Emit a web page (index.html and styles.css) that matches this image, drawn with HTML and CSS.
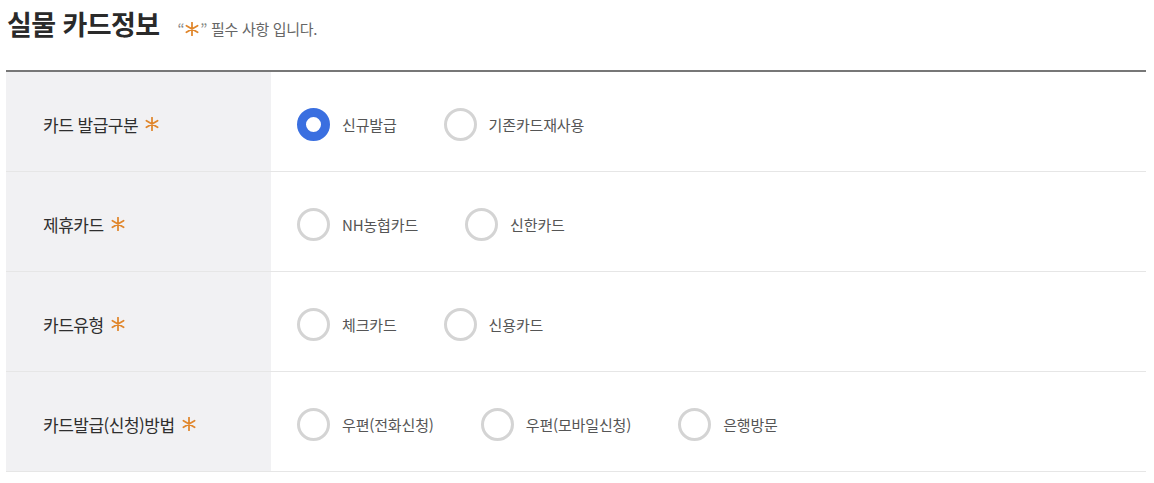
FILE: index.html
```html
<!DOCTYPE html>
<html lang="ko">
<head>
<meta charset="utf-8">
<link rel="stylesheet" href="styles.css">
</head>
<body>
<div class="page">
  <div class="head">
    <h2 class="title">실물 카드정보</h2>
    <p class="note"><span class="q">“<svg class="ast ast-sm" viewBox="0 0 12 12"><path d="M6 0.5V11.5M1.2 3.2L10.8 8.8M1.2 8.8L10.8 3.2"/></svg>”</span> 필수 사항 입니다.</p>
  </div>
  <div class="table">
    <div class="row">
      <div class="label">카드 발급구분<svg class="ast" viewBox="0 0 12 12"><path d="M6 0.5V11.5M1.2 3.2L10.8 8.8M1.2 8.8L10.8 3.2"/></svg></div>
      <div class="field">
        <label class="opt"><span class="radio checked"></span>신규발급</label>
        <label class="opt"><span class="radio"></span>기존카드재사용</label>
      </div>
    </div>
    <div class="row">
      <div class="label">제휴카드<svg class="ast" viewBox="0 0 12 12"><path d="M6 0.5V11.5M1.2 3.2L10.8 8.8M1.2 8.8L10.8 3.2"/></svg></div>
      <div class="field">
        <label class="opt"><span class="radio"></span>NH농협카드</label>
        <label class="opt"><span class="radio"></span>신한카드</label>
      </div>
    </div>
    <div class="row">
      <div class="label">카드유형<svg class="ast" viewBox="0 0 12 12"><path d="M6 0.5V11.5M1.2 3.2L10.8 8.8M1.2 8.8L10.8 3.2"/></svg></div>
      <div class="field">
        <label class="opt"><span class="radio"></span>체크카드</label>
        <label class="opt"><span class="radio"></span>신용카드</label>
      </div>
    </div>
    <div class="row">
      <div class="label">카드발급(신청)방법<svg class="ast" viewBox="0 0 12 12"><path d="M6 0.5V11.5M1.2 3.2L10.8 8.8M1.2 8.8L10.8 3.2"/></svg></div>
      <div class="field">
        <label class="opt"><span class="radio"></span>우편(전화신청)</label>
        <label class="opt"><span class="radio"></span>우편(모바일신청)</label>
        <label class="opt"><span class="radio"></span>은행방문</label>
      </div>
    </div>
  </div>
</div>
</body>
</html>
```

FILE: styles.css
```css
* { box-sizing: border-box; }
html, body { margin: 0; padding: 0; background: #fff; }
body {
  font-family: "Noto Sans CJK KR", "Noto Sans", sans-serif;
  color: #333;
}
.page { padding: 0 8px 0 6px; }
.head {
  display: flex;
  align-items: baseline;
  height: 70px;
  padding-top: 6px;
}
.title {
  margin: 0 0 0 1px;
  font-size: 27px;
  font-weight: 700;
  color: #2a2a2a;
  letter-spacing: -0.6px;
  line-height: 36px;
}
.note {
  margin: 0 0 0 18px;
  font-size: 15px;
  color: #666;
  letter-spacing: -0.3px;
  display: flex;
  align-items: center;
}
.note .q { color: #888; display: inline-flex; align-items: center; margin-right: 4px; }
.ast {
  width: 12px;
  height: 12px;
  fill: none;
  stroke: #e0862b;
  stroke-width: 1.5;
  stroke-linecap: round;
  flex: none;
}
.ast-sm { width: 14px; height: 14px; margin: 0 1px; }
.table {
  border-top: 2px solid #777;
}
.row {
  display: flex;
  height: 100px;
  border-bottom: 1px solid #e6e6e6;
}
.label {
  width: 265px;
  flex: none;
  background: #f1f1f3;
  display: flex;
  align-items: center;
  padding-left: 37px;
  padding-top: 5px;
  font-size: 17px;
  color: #2e2e2e;
  letter-spacing: -0.5px;
}
.label .ast { margin-left: 7px; width: 14px; height: 14px; }
.field {
  display: flex;
  align-items: center;
  padding-left: 26px;
  padding-top: 5px;
  gap: 47px;
}
.opt {
  display: flex;
  align-items: center;
  font-size: 15px;
  color: #555;
  letter-spacing: -0.15px;
}
.radio {
  width: 33px;
  height: 33px;
  border-radius: 50%;
  border: 3px solid #d4d4d4;
  background: #fff;
  margin-right: 12px;
  flex: none;
}
.radio.checked {
  border: 9px solid #3a6fe0;
}
```
